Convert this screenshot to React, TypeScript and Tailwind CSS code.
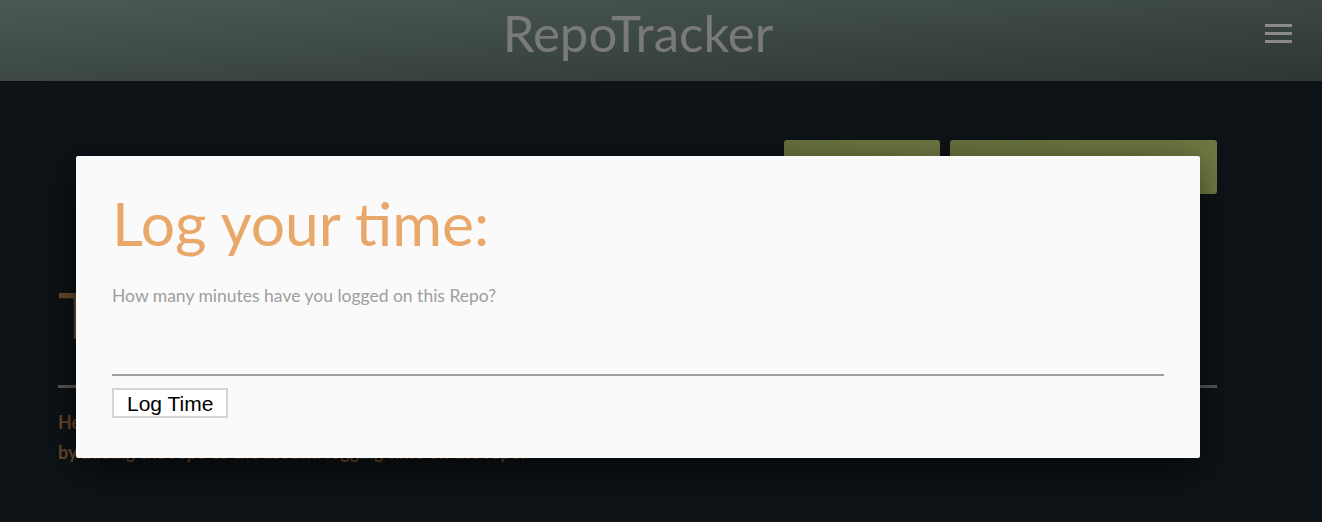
import { useState } from 'react';

const font = { fontFamily: 'Lato, "Noto Sans", sans-serif' };

export default function App() {
  const [minutes, setMinutes] = useState('');

  return (
    <div className="relative min-h-[522px] bg-[#0e1317] overflow-hidden" style={font}>
      {/* Header */}
      <header className="relative h-[81px] bg-gradient-to-br from-[#4b5a54] to-[#2e3632] flex items-center justify-center">
        <h1 className="text-[51px] leading-none text-[#7a7a7a] -mt-[16px] mr-[46px]">RepoTracker</h1>
        <button className="absolute right-[30px] top-[24px] flex flex-col gap-[5px]">
          <span className="block w-[27px] h-[3px] bg-[#8a8a8a]" />
          <span className="block w-[27px] h-[3px] bg-[#8a8a8a]" />
          <span className="block w-[27px] h-[3px] bg-[#8a8a8a]" />
        </button>
      </header>

      {/* Page behind the modal */}
      <main className="px-[58px] pr-[105px] pt-[59px]">
        <div className="flex justify-end gap-[10px]">
          <div className="w-[156px] h-[54px] rounded-[3px] bg-gradient-to-br from-[#6a7340] to-[#777e46]" />
          <div className="w-[267px] h-[54px] rounded-[3px] bg-gradient-to-br from-[#6a7340] to-[#777e46]" />
        </div>
        <h2 className="mt-[86px] text-[64px] leading-[70px] text-[#6a4a2c]">Time Tracking</h2>
        <div className="mt-[35px] h-[3px] bg-[#5a5a5a]" />
        <p className="mt-[19px] text-[18px] leading-[30px] font-bold text-[#6a4a2c]">
          Here you can keep track of the hours you have spent on each repository
          <br />
          by adding the repo to the list and logging time on the repo.
        </p>
      </main>

      {/* Modal */}
      <div className="absolute left-[76px] top-[156px] w-[1124px] h-[302px] bg-[#fafafa] rounded-[2px] shadow-[0_10px_40px_rgba(0,0,0,0.6)] px-[36px] pt-[32px]">
        <h3 className="text-[60.5px] leading-[70px] text-[#e9a86a]">Log your time:</h3>
        <label className="block mt-[28px] text-[17.5px] leading-[20px] text-[#9e9e9e]">
          How many minutes have you logged on this Repo?
        </label>
        <input
          value={minutes}
          onChange={(e) => setMinutes(e.target.value)}
          className="block w-full mt-[36px] h-[34px] bg-transparent border-b-2 border-[#9e9e9e] outline-none text-[16px]"
        />
        <button
          className="mt-[12px] h-[30px] px-[13px] bg-white border-2 border-[#d4d4d4] text-[21px] leading-none text-black"
          style={{ fontFamily: '"Liberation Sans", Arial, sans-serif' }}
        >
          Log Time
        </button>
      </div>
    </div>
  );
}
